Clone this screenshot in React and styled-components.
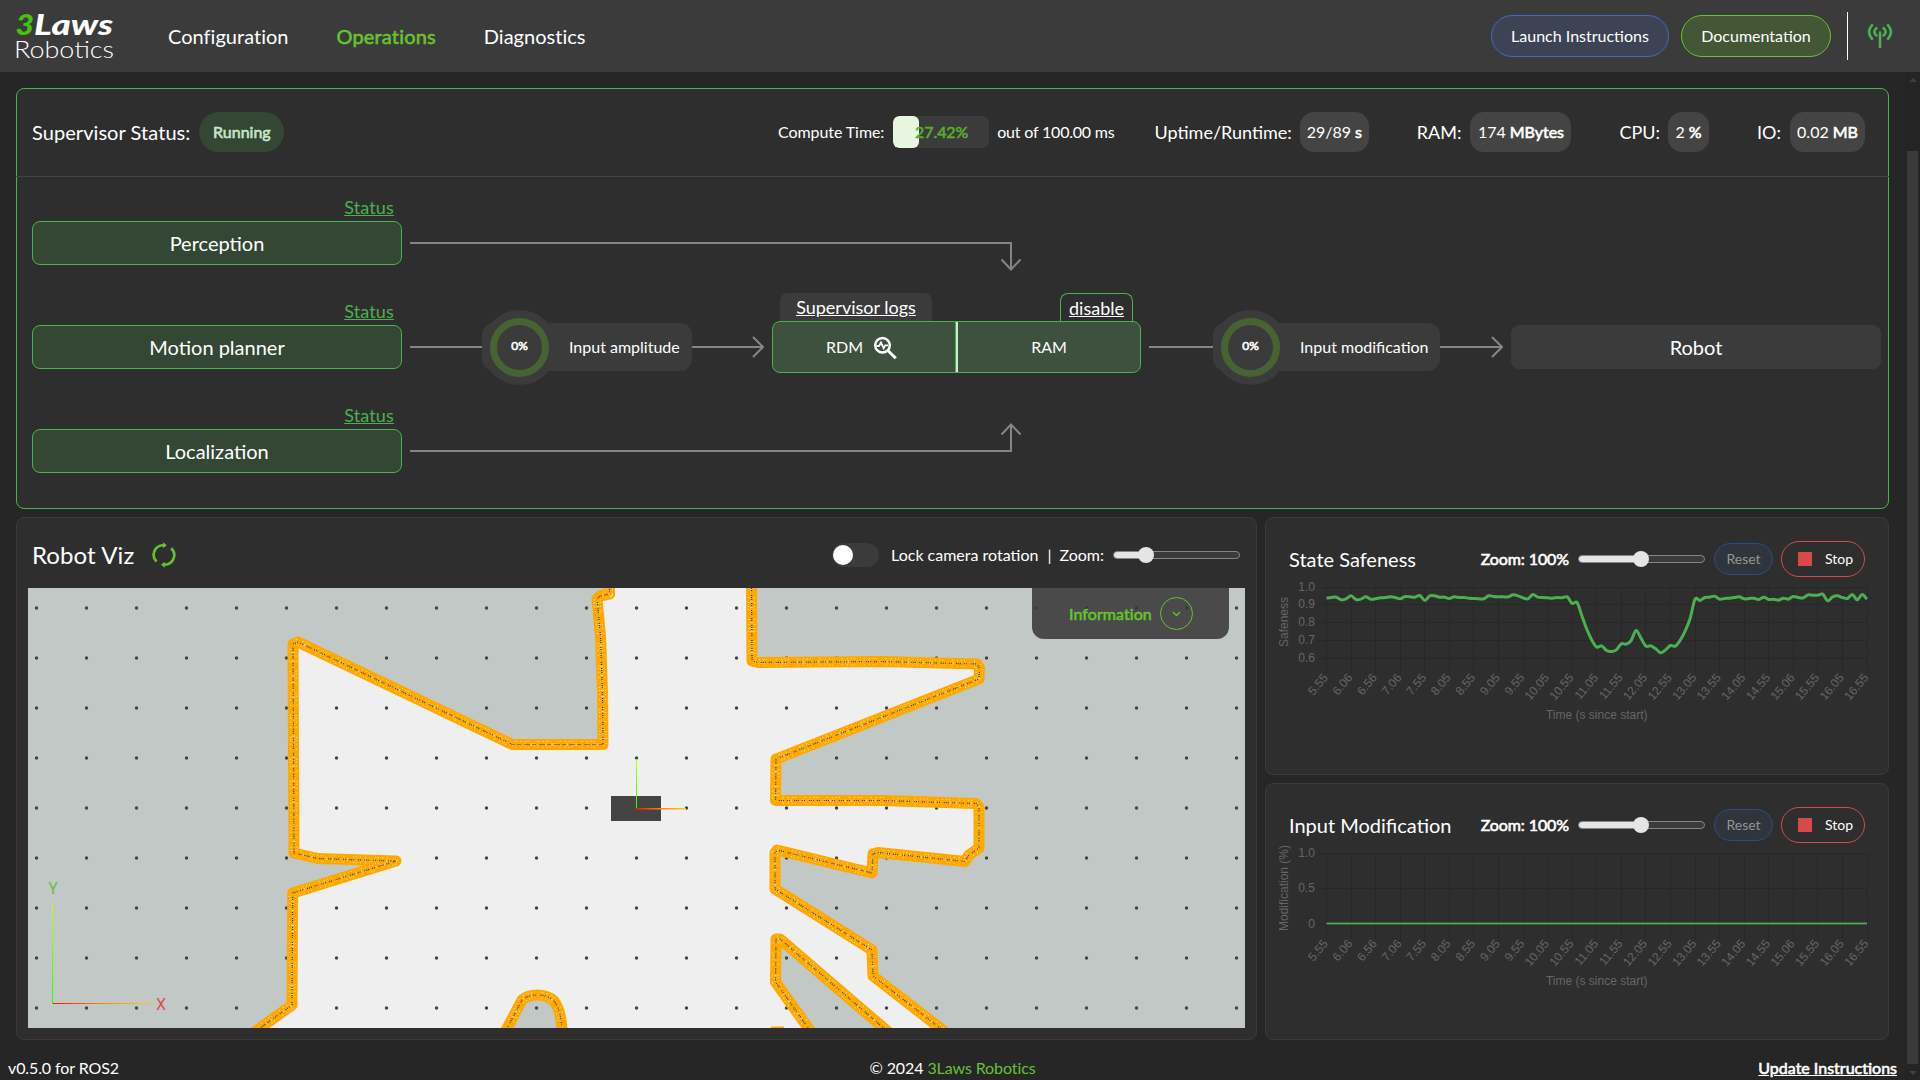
import React from "react";
import styled, { createGlobalStyle, css } from "styled-components";

const Global = createGlobalStyle`
  * { box-sizing: border-box; }
  html, body { margin: 0; padding: 0; background: #262626; }
  body { font-family: Lato, "Open Sans", sans-serif; font-size: 16px; color: #fff; overflow: hidden; }
  button { font-family: inherit; cursor: pointer; }
  a { color: inherit; }
`;

const strong = css`
  -webkit-text-stroke: 0.6px currentColor;
`;

const Strong = styled.span`
  ${strong}
`;

const Page = styled.div`
  width: 1920px;
  height: 1080px;
  display: flex;
  flex-direction: column;
  background: #262626;
  overflow: hidden;
`;

/* ---------- header ---------- */

const Header = styled.header`
  height: 72px;
  flex: none;
  display: flex;
  align-items: center;
  padding: 0 27px 0 15px;
  background: #3b3b3b;
`;

const Logo = styled.svg`
  width: 100px;
  height: 64px;
  margin-right: 53px;
  overflow: visible;
`;

const Nav = styled.nav`
  display: flex;
  gap: 48px;
  flex: 1;
`;

const NavLink = styled.a`
  font-size: 20px;
  line-height: 24px;
  letter-spacing: ${(p) => (p.$active ? 0.16 : 0.02)}px;
  color: ${(p) => (p.$active ? "#67c22f" : "#fff")};
  ${(p) => p.$active && strong}
`;

const HeaderButton = styled.button`
  height: 42px;
  width: ${(p) => p.$w}px;
  margin-right: ${(p) => p.$gap}px;
  padding: 0 0 2px;
  border-radius: 21px;
  border: 1px solid ${(p) => (p.$green ? "#67c22f" : "#4169c0")};
  background: ${(p) => (p.$green ? "#435636" : "#3d4354")};
  color: #fff;
  font-size: 16px;
`;

const HeaderRule = styled.div`
  width: 1px;
  height: 48px;
  margin-right: 19px;
  background: #fff;
`;

/* ---------- body ---------- */

const Body = styled.div`
  flex: 1;
  display: flex;
  min-height: 0;
`;

const Main = styled.main`
  width: 1905px;
  display: flex;
  flex-direction: column;
  padding-top: 16px;
`;

const Scrollbar = styled.div`
  width: 15px;
  display: flex;
  flex-direction: column;
  align-items: center;
  padding: 6px 0 5px;
  background: #242424;
`;

const ScrollThumb = styled.div`
  width: 11px;
  height: 914px;
  margin: 69px 0 7px;
  background: #3b3b3b;
`;

const ScrollArrow = styled.div`
  border: 4px solid transparent;
  border-top-width: ${(p) => (p.$up ? 0 : 4)}px;
  border-bottom-width: ${(p) => (p.$up ? 4 : 0)}px;
  border-${(p) => (p.$up ? "bottom" : "top")}-color: #404040;
`;

const Supervisor = styled.section`
  height: 421px;
  width: 1873px;
  margin-left: 16px;
  border: 1px solid #4caf50;
  border-radius: 8px;
  background: #2e2e2e;
`;

const StatusBar = styled.div`
  height: 88px;
  margin: 0 -1px;
  padding: 0 24px 1px 16px;
  display: flex;
  align-items: center;
  border-bottom: 1px solid #444;
`;

const StatusTitle = styled.div`
  font-size: 20px;
  letter-spacing: 0.06px;
  margin-right: 9px;
`;

const RunningChip = styled.div`
  width: 85px;
  height: 40px;
  padding-bottom: 2px;
  border-radius: 20px;
  display: flex;
  align-items: center;
  justify-content: center;
  background: #344734;
  color: #c8e6c9;
  ${strong}
`;

const Metrics = styled.div`
  margin-left: auto;
  display: flex;
  align-items: center;
`;

const Metric = styled.div`
  display: flex;
  align-items: center;
  gap: ${(p) => p.$inner || 9}px;
  margin-left: ${(p) => p.$gap}px;
  font-size: ${(p) => (p.$small ? 16 : 18)}px;
  letter-spacing: ${(p) => (p.$small ? -0.08 : 0)}px;
`;

const MetricLabel = styled.span`
  padding-bottom: ${(p) => (p.$small ? 2 : 1)}px;
  letter-spacing: ${(p) => (p.$tight ? "-0.2px" : "inherit")};
`;

const MetricChip = styled.div`
  width: ${(p) => p.$w}px;
  height: 40px;
  padding-bottom: 2px;
  border-radius: 14px;
  display: flex;
  align-items: center;
  justify-content: center;
  gap: 4px;
  font-size: 16px;
  background: #444;
`;

const ComputeBar = styled.div`
  width: 96px;
  height: 32px;
  border-radius: 6px;
  display: flex;
  align-items: center;
  background: #3b3b3b;
  overflow: hidden;
`;

const ComputeFill = styled.div`
  height: 32px;
  border-radius: 6px;
  background: #e8f5e0;
`;

const ComputeText = styled.div`
  margin-left: -4px;
  padding-bottom: 2px;
  color: #5aad2c;
  ${strong}
`;

const Flow = styled.div`
  display: grid;
  grid-template-columns: 370px 354px 369px 354px 370px;
  grid-template-rows: repeat(3, 104px);
  column-gap: 8px;
  padding: 13px 0 0 15px;
`;

const Stage = styled.div`
  display: flex;
  flex-direction: column;
  grid-column: ${(p) => p.$col};
  grid-row: ${(p) => p.$row};
`;

const StatusLink = styled.a`
  height: 31px;
  padding: 6px 8px 0 0;
  line-height: 22px;
  text-align: right;
  font-size: 18px;
  letter-spacing: 0.15px;
  text-decoration: underline;
  color: #4caf50;
`;

const StageBox = styled.div`
  height: 44px;
  margin-top: ${(p) => (p.$plain ? 31 : 0)}px;
  border: 1px solid ${(p) => (p.$plain ? "#3b3b3b" : "#4caf50")};
  border-radius: 8px;
  background: ${(p) => (p.$plain ? "#3b3b3b" : "#344734")};
  display: flex;
  align-items: center;
  justify-content: center;
  font-size: 20px;
`;

const BentArrow = styled.svg`
  width: 620px;
  height: 60px;
  grid-column: 2 / 4;
  grid-row: ${(p) => p.$row};
  margin-top: ${(p) => p.$top}px;
`;

const Link = styled.div`
  grid-row: 2;
  grid-column: ${(p) => p.$col};
  display: flex;
  align-items: center;
  height: 75px;
  margin-top: 15.5px;
`;

const Line = styled.div`
  width: ${(p) => p.$w}px;
  height: 2px;
  background: #858585;
`;

const Gauge = styled.div`
  width: ${(p) => p.$w}px;
  height: 48px;
  border-radius: 12px;
  background: #3b3b3b;
  display: flex;
  align-items: center;
  font-size: 16px;
`;

const GaugeLabel = styled.span`
  padding-bottom: 2px;
`;

const Dial = styled.div`
  flex: none;
  width: 75px;
  height: 75px;
  border-radius: 50%;
  background: #3b3b3b;
  display: flex;
  align-items: center;
  justify-content: center;
  margin-right: 12px;
`;

const Ring = styled.div`
  width: 59px;
  height: 59px;
  border-radius: 50%;
  border: 7px solid #486333;
  display: flex;
  align-items: center;
  justify-content: center;
  font-size: 12px;
  padding-bottom: 3px;
  ${strong}
`;

const Head = styled.svg`
  flex: 1;
  height: 24px;
`;

const Modules = styled.div`
  grid-column: 3;
  grid-row: 2;
`;

const Tabs = styled.div`
  height: 28px;
  margin-top: -1px;
  padding: 0 8px;
  display: flex;
  justify-content: space-between;
`;

const Tab = styled.a`
  width: ${(p) => p.$w}px;
  height: 28px;
  border-radius: 8px 8px 0 0;
  border: ${(p) => (p.$outlined ? "1px solid #4caf50" : "0")};
  border-bottom: 0;
  background: ${(p) => (p.$outlined ? "#2e2e2e" : "#3b3b3b")};
  text-align: center;
  font-size: 18px;
  line-height: 29px;
  text-decoration: underline;
`;

const ModuleBox = styled.div`
  height: 52px;
  border: 1px solid #4caf50;
  border-radius: 8px;
  background: #3e513e;
  display: grid;
  grid-template-columns: 183px 1fr;
  font-size: 16px;
`;

const Module = styled.div`
  display: flex;
  align-items: center;
  justify-content: center;
  gap: 10px;
  padding: 0 ${(p) => (p.$split ? 0 : 5)}px 2px 0;
  border-left: ${(p) => (p.$split ? "2px solid #c8f0c8" : "0")};
  box-shadow: ${(p) => (p.$split ? "-1px 0 0 #4caf50" : "none")};
  svg { margin-top: 4px; }
`;

/* ---------- lower panels ---------- */

const Lower = styled.div`
  display: flex;
  gap: 8px;
  margin: 8px 0 0 16px;
`;

const Panel = styled.section`
  border: 1px solid #3a3a3a;
  border-radius: 8px;
  background: #2e2e2e;
  overflow: hidden;
`;

const VizPanel = styled(Panel)`
  width: 1241px;
  height: 523px;
`;

const VizHeader = styled.div`
  height: 70px;
  padding: 4px 16px 0 15px;
  display: flex;
  align-items: center;
`;

const VizTitle = styled.h2`
  margin: 0 18px 0 0;
  padding-bottom: 2px;
  font-size: 24px;
  font-weight: 400;
  letter-spacing: 0.1px;
`;

const VizTools = styled.div`
  margin-left: auto;
  display: flex;
  align-items: center;
  font-size: 16px;
`;

const Toggle = styled.div`
  width: 47px;
  height: 24px;
  padding: 2px 1px;
  margin-right: 12px;
  border-radius: 12px;
  background: #3b3b3b;
`;

const Knob = styled.div`
  width: 20px;
  height: 20px;
  border-radius: 50%;
  background: #fff;
`;

const ToolText = styled.span`
  padding-bottom: 1px;
  margin-right: ${(p) => p.$gap}px;
`;

const Track = styled.div`
  width: 127px;
  height: 8px;
  border: 1px solid #858585;
  border-radius: 4px;
  background: #3b3b3b;
  display: flex;
  align-items: center;
`;

const TrackFill = styled.div`
  width: ${(p) => p.$w}px;
  height: 6px;
  border-radius: 3px 0 0 3px;
  background: #e5e5e5;
`;

const Thumb = styled.div`
  flex: none;
  width: 16px;
  height: 16px;
  margin-left: -8px;
  border-radius: 50%;
  background: #e5e5e5;
`;

const MapArea = styled.div`
  position: relative;
  width: 1217px;
  height: 440px;
  margin-left: 11px;
`;

const MapSvg = styled.svg`
  display: block;
  width: 1217px;
  height: 440px;
`;

const Info = styled.div`
  position: absolute;
  right: 16px;
  top: 0;
  width: 197px;
  height: 51px;
  border-radius: 0 0 12px 12px;
  background: rgba(56, 56, 56, 0.88);
  display: flex;
  align-items: center;
  padding-left: 37px;
  gap: 8px;
  letter-spacing: 0.08px;
  color: #67c22f;
`;

const InfoButton = styled.div`
  width: 33px;
  height: 33px;
  border: 1px solid #67c22f;
  border-radius: 50%;
  display: flex;
  align-items: center;
  justify-content: center;
`;

const Charts = styled.div`
  display: flex;
  flex-direction: column;
  gap: 8px;
`;

const ChartPanel = styled(Panel)`
  width: 624px;
  height: ${(p) => p.$h}px;
`;

const ChartHeader = styled.div`
  height: 60px;
  padding: 21px 23px 0 23px;
  display: flex;
  align-items: center;
`;

const ChartTitle = styled.h3`
  flex: 1;
  margin: 0;
  font-size: 20px;
  font-weight: 400;
`;

const ZoomText = styled.span`
  margin-right: 9px;
  letter-spacing: -0.1px;
  ${strong}
`;

const Reset = styled.button`
  width: 59px;
  height: 32px;
  padding: 0;
  margin: 0 8px 0 9px;
  border-radius: 16px;
  border: 1px solid #304a80;
  background: #30343d;
  color: #949494;
  font-size: 14px;
`;

const Stop = styled.button`
  width: 84px;
  height: 36px;
  padding: 0 11px 0 16px;
  display: flex;
  align-items: center;
  justify-content: space-between;
  border-radius: 18px;
  border: 1px solid #d64a4a;
  background: transparent;
  color: #fff;
  font-size: 14px;
`;

const StopIcon = styled.span`
  width: 14px;
  height: 14px;
  background: #d64a4a;
`;

const Plot = styled.svg`
  display: block;
  width: 622px;
  height: 170px;
  font-family: "Liberation Sans", Arial, sans-serif;
  font-size: 12px;
`;

const Footer = styled.footer`
  flex: 1;
  display: grid;
  grid-template-columns: 1fr auto 1fr;
  align-items: center;
  padding: 15px 8px 0;
  letter-spacing: -0.1px;
`;

const FooterLink = styled.a`
  justify-self: end;
  letter-spacing: 0;
  text-decoration: underline;
  ${strong}
`;

const Brand = styled.span`
  color: #67c22f;
`;

/* ---------- data ---------- */

/* distance below the 1.0 grid line, in thirds of a pixel, one sample per 0.1 s */
const SAFENESS = [
  32, 30, 29, 37, 34, 25, 36, 35, 28, 35, 34, 31, 30, 28, 30, 34, 27, 28, 29, 24, 39, 25, 25, 29, 29, 33, 28, 30,
  30, 32, 33, 34, 34, 25, 27, 28, 28, 28, 22, 25, 31, 34, 21, 29, 30, 31, 32, 30, 31, 28, 48, 45, 86, 126, 158,
  179, 175, 189, 192, 187, 169, 170, 159, 129, 152, 176, 175, 184, 196, 187, 174, 176, 158, 130, 93, 35, 39, 30,
  29, 26, 35, 33, 32, 30, 28, 34, 33, 32, 36, 29, 36, 35, 38, 32, 35, 27, 30, 31, 22, 23, 23, 20, 40, 28, 25, 30,
  33, 21, 37, 21, 35,
];

const TIMES = [
  "5.55", "6.06", "6.56", "7.06", "7.55", "8.05", "8.55", "9.05", "9.55", "10.05", "10.55", "11.05", "11.55",
  "12.05", "12.55", "13.05", "13.55", "14.05", "14.55", "15.06", "15.55", "16.05", "16.55",
];

const LEFT = 60.5;
const WIDTH = 540.5;
const TOP = 9.5;
const BOTTOM = 87.5;

function smooth(points) {
  let d = `M${points[0][0]} ${points[0][1]}`;
  for (let i = 0; i < points.length - 1; i++) {
    const p0 = points[Math.max(i - 1, 0)];
    const p1 = points[i];
    const p2 = points[i + 1];
    const p3 = points[Math.min(i + 2, points.length - 1)];
    const k = 0.16;
    d += `C${p1[0] + (p2[0] - p0[0]) * k} ${p1[1] + (p2[1] - p0[1]) * k} ${p2[0] - (p3[0] - p1[0]) * k} ${
      p2[1] - (p3[1] - p1[1]) * k
    } ${p2[0]} ${p2[1]}`;
  }
  return d;
}

const SAFENESS_PATH = smooth(SAFENESS.map((v, i) => [LEFT + (i * WIDTH) / 110, TOP + v / 3]));

function Chart({ label, labelY, ticks, children }) {
  return (
    <Plot viewBox="0 0 622 170">
      <g stroke="#272727" strokeWidth="1">
        {TIMES.map((t, i) => {
          const x = Math.round(LEFT + (i * WIDTH) / 22 - 0.5) + 0.5;
          return <line key={t} x1={x} x2={x} y1={TOP} y2={BOTTOM + 8} strokeOpacity={0.9} />;
        })}
        {ticks.map(([t, y]) => (
          <line key={t} x1={LEFT - 8} x2={LEFT + WIDTH} y1={y} y2={y} />
        ))}
      </g>
      <g fill="#666">
        {ticks.map(([t, y]) => (
          <text key={t} x={LEFT - 11.5} y={y + 3.5} textAnchor="end">{t}</text>
        ))}
        {TIMES.map((t, i) => (
          <text
            key={t}
            textAnchor="end"
            transform={`translate(${LEFT + (i * WIDTH) / 22 + 2} ${BOTTOM + 12.5}) rotate(-50)`}
          >
            {t}
          </text>
        ))}
        <text x={LEFT + WIDTH / 2} y="141" textAnchor="middle">Time (s since start)</text>
        <text textAnchor="middle" transform={`translate(22 ${labelY}) rotate(-90)`}>{label}</text>
      </g>
      {children}
    </Plot>
  );
}

function ChartCard({ title, height, children }) {
  return (
    <ChartPanel $h={height}>
      <ChartHeader>
        <ChartTitle>{title}</ChartTitle>
        <ZoomText>Zoom: 100%</ZoomText>
        <Slider value={62} />
        <Reset>Reset</Reset>
        <Stop>
          <StopIcon />
          Stop
        </Stop>
      </ChartHeader>
      {children}
    </ChartPanel>
  );
}

function Slider({ value }) {
  return (
    <Track>
      <TrackFill $w={value} />
      <Thumb />
    </Track>
  );
}

/* map geometry in canvas pixels */
const LEFT_WALL =
  "M221 448L264 417L264.700 305L368 273L290 270.500L266 265L265 56L270 54L484.500 156.500L575 156.500L574.500 104L572.500 48L569 11L572 8L581.500 6L581.500 -8";
const RIGHT_WALL =
  "L724 73L730 74.500L853 73.500L949 76L951.500 80L951 91L748 171L747.500 212.500L853 212.500L948 215.500L951 219L951 260L941 267L937 273.500L850 264.500L845 266L844 285L749 262L747 265L747 301L844 362L845 388L930 454";
const INNER_WALL = "M786 448L747.500 394L748 351L752 351L865 448";
const ARCH = "M475 448L494 412Q500 407 509 407Q520 407 526 413Q534 423 534 448";
const WALLS = [LEFT_WALL, "M723.500 -8" + RIGHT_WALL, INNER_WALL, ARCH, "M743 444H756"];

const DOTS = [];
for (let y = 20; y < 440; y += 50) for (let x = 8.5; x < 1217; x += 50) DOTS.push([x, y]);

function RobotMap() {
  return (
    <MapSvg viewBox="0 0 1217 440">
      <defs>
        <linearGradient id="up" x1="0" y1="1" x2="0" y2="0">
          <stop offset="0" stopColor="#20ff00" />
          <stop offset="1" stopColor="#c0ff20" />
        </linearGradient>
        <linearGradient id="right">
          <stop offset="0" stopColor="#ff1000" />
          <stop offset="0.5" stopColor="#ff8800" />
          <stop offset="1" stopColor="#f5d020" />
        </linearGradient>
      </defs>
      <rect width="1217" height="440" fill="#c2c8c6" />
      <path d={LEFT_WALL + "L723.500 -8" + RIGHT_WALL + "Z"} fill="#efefef" />
      <path d={INNER_WALL + "Z"} fill="#c2c8c6" />
      <path d={ARCH + "Z"} fill="#c2c8c6" />
      <g fill="#3e4442">
        {DOTS.map(([x, y]) => (
          <circle key={x + "-" + y} cx={x} cy={y} r="1.700" />
        ))}
      </g>
      <g fill="none" strokeLinejoin="round">
        {WALLS.map((d) => (
          <g key={d}>
            <path d={d} stroke="#ffa800" strokeWidth="11" />
            <path d={d} stroke="#fff0cf" strokeWidth="7" strokeDasharray="1 3 1 2 1 9 1 4" opacity="0.8" />
            <path d={d} stroke="#ffa800" strokeWidth="5" />
            <path d={d} stroke="#e8d9b4" strokeWidth="3" strokeDasharray="1 5 1 2 1 11" opacity="0.8" />
            <path d={d} stroke="#3a3a3c" strokeWidth="1.200" strokeDasharray="1 1 1 1 1 3 1 1 1 4" />
          </g>
        ))}
      </g>
      <rect x="583" y="208" width="50" height="25" fill="#444" />
      <rect x="608" y="171" width="1" height="50" fill="url(#up)" />
      <rect x="608" y="220" width="50" height="1.500" fill="url(#right)" />
      <rect x="24" y="315" width="1" height="101" fill="url(#up)" />
      <rect x="25" y="415" width="101" height="1" fill="url(#right)" />
      <g fontFamily="Roboto, sans-serif" fontSize="16" textAnchor="middle">
        <text x="25" y="306" fill="#6dbb45">Y</text>
        <text x="133" y="422" fill="#d9534f">X</text>
      </g>
    </MapSvg>
  );
}

function Connector({ col, lineA, width, label, lineB }) {
  return (
    <Link $col={col}>
      <Line $w={lineA} />
      <Gauge $w={width}>
        <Dial>
          <Ring>0%</Ring>
        </Dial>
        <GaugeLabel>{label}</GaugeLabel>
      </Gauge>
      <Head viewBox={`0 0 ${lineB} 24`}>
        <path
          d={`M0 12H${lineB - 1}M${lineB - 11} 2L${lineB - 1} 12L${lineB - 11} 22`}
          fill="none"
          stroke="#858585"
          strokeWidth="2"
        />
      </Head>
    </Link>
  );
}

export default function App() {
  return (
    <Page>
      <Global />
      <Header>
        <Logo viewBox="0 -4 100 64" fontFamily="Lato, sans-serif" fill="#fff">
          <g fontWeight="900" fontStyle="italic" fontSize="28.500">
            <text x="0.500" y="26.600" textLength="18.500" lengthAdjust="spacingAndGlyphs" fill="#45c30c">3</text>
            <text x="19" y="26.600" textLength="79" lengthAdjust="spacingAndGlyphs">Laws</text>
          </g>
          <text x="-1" y="50" fontWeight="300" fontSize="23" textLength="100" lengthAdjust="spacingAndGlyphs">
            Robotics
          </text>
        </Logo>
        <Nav>
          <NavLink>Configuration</NavLink>
          <NavLink $active>Operations</NavLink>
          <NavLink>Diagnostics</NavLink>
        </Nav>
        <HeaderButton $w={178} $gap={12}>Launch Instructions</HeaderButton>
        <HeaderButton $w={150} $gap={16} $green>Documentation</HeaderButton>
        <HeaderRule />
        <svg width="26" height="28" viewBox="0 0 26 28" fill="none" stroke="#4caf50" strokeWidth="2.600" strokeLinecap="round">
          <path d="M13 10.500V25M9.400 6.200Q5.200 9.800 9.400 13.400M16.600 6.200Q20.800 9.800 16.600 13.400M5 3.200Q-0.900 10 5 16.800M21 3.200Q26.900 10 21 16.800" />
        </svg>
      </Header>
      <Body>
        <Main>
          <Supervisor>
            <StatusBar>
              <StatusTitle>Supervisor Status:</StatusTitle>
              <RunningChip>Running</RunningChip>
              <Metrics>
                <Metric $gap={0} $inner={8.5} $small>
                  <MetricLabel $small>Compute Time:</MetricLabel>
                  <ComputeBar>
                    <ComputeFill style={{ width: "27.42%" }} />
                    <ComputeText>27.42%</ComputeText>
                  </ComputeBar>
                  <MetricLabel $small $tight>out of 100.00 ms</MetricLabel>
                </Metric>
                <Metric $gap={40} $inner={8}>
                  <MetricLabel>Uptime/Runtime:</MetricLabel>
                  <MetricChip $w={69}>29/89 <Strong>s</Strong></MetricChip>
                </Metric>
                <Metric $gap={48}>
                  <MetricLabel>RAM:</MetricLabel>
                  <MetricChip $w={101}>174 <Strong>MBytes</Strong></MetricChip>
                </Metric>
                <Metric $gap={48} $inner={8}>
                  <MetricLabel>CPU:</MetricLabel>
                  <MetricChip $w={41}>2 <Strong>%</Strong></MetricChip>
                </Metric>
                <Metric $gap={48} $inner={9}>
                  <MetricLabel>IO:</MetricLabel>
                  <MetricChip $w={75}>0.02 <Strong>MB</Strong></MetricChip>
                </Metric>
              </Metrics>
            </StatusBar>
            <Flow>
              <Stage $col={1} $row={1}>
                <StatusLink>Status</StatusLink>
                <StageBox>Perception</StageBox>
              </Stage>
              <BentArrow $row={1} $top={42} viewBox="0 0 620 60" fill="none" stroke="#858585" strokeWidth="2">
                <path d="M0 11H601V37M591.500 27.500L601 37.500L610.500 27.500" />
              </BentArrow>
              <Stage $col={1} $row={2}>
                <StatusLink>Status</StatusLink>
                <StageBox>Motion planner</StageBox>
              </Stage>
              <Connector col={2} lineA={72} width={210} label="Input amplitude" lineB={72} />
              <Modules>
                <Tabs>
                  <Tab $w={152}>Supervisor logs</Tab>
                  <Tab $w={73} $outlined>disable</Tab>
                </Tabs>
                <ModuleBox>
                  <Module>
                    RDM
                    <svg width="25" height="24" viewBox="0 0 25 24" fill="none" stroke="#fff">
                      <circle cx="9.500" cy="9.300" r="7.300" strokeWidth="2.500" />
                      <path d="M14.800 14.500L22.800 22.300" strokeWidth="3" />
                      <path d="M3.500 10H6L8 6.500L10.700 12.200L12.300 9.300H15" strokeWidth="1.800" />
                    </svg>
                  </Module>
                  <Module $split>RAM</Module>
                </ModuleBox>
              </Modules>
              <Connector col={4} lineA={64} width={227} label="Input modification" lineB={63} />
              <Stage $col={5} $row={2}>
                <StageBox $plain>Robot</StageBox>
              </Stage>
              <Stage $col={1} $row={3}>
                <StatusLink>Status</StatusLink>
                <StageBox>Localization</StageBox>
              </Stage>
              <BentArrow $row={3} $top={22} viewBox="0 0 620 60" fill="none" stroke="#858585" strokeWidth="2">
                <path d="M0 31H601V5M591.500 14.500L601 4.500L610.500 14.500" />
              </BentArrow>
            </Flow>
          </Supervisor>
          <Lower>
            <VizPanel>
              <VizHeader>
                <VizTitle>Robot Viz</VizTitle>
                <svg width="24" height="26" viewBox="0 0 24 26" fill="none" stroke="#67c22f" strokeWidth="2.600">
                  <path d="M4.500 19.500A9.500 9.500 0 0 1 11.500 3.300M19.200 6.300A9.500 9.500 0 0 1 12.500 22.700" />
                  <path d="M11 0.300L14.800 3.300L11 6.300ZM12.800 19.700L9 22.700L12.800 25.700Z" fill="#67c22f" stroke="none" />
                </svg>
                <VizTools>
                  <Toggle>
                    <Knob />
                  </Toggle>
                  <ToolText $gap={9}>Lock camera rotation</ToolText>
                  <ToolText $gap={8}>|</ToolText>
                  <ToolText $gap={9}>Zoom:</ToolText>
                  <Slider value={32} />
                </VizTools>
              </VizHeader>
              <MapArea>
                <RobotMap />
                <Info>
                  <Strong>Information</Strong>
                  <InfoButton>
                    <svg width="9" height="6" viewBox="0 0 9 6" fill="none" stroke="#67c22f" strokeWidth="1.300">
                      <path d="M1 1L4.500 4.500L8 1" />
                    </svg>
                  </InfoButton>
                </Info>
              </MapArea>
            </VizPanel>
            <Charts>
              <ChartCard title="State Safeness" height={258}>
                <Chart
                  label="Safeness"
                  labelY={44}
                  ticks={[["1.0", 9.5], ["0.9", 26.5], ["0.8", 44.5], ["0.7", 62.5], ["0.6", 80.5]]}
                >
                  <path d={SAFENESS_PATH} fill="none" stroke="#4caf50" strokeWidth="3" />
                </Chart>
              </ChartCard>
              <ChartCard title="Input Modification" height={257}>
                <Chart label="Modification (%)" labelY={44} ticks={[["1.0", 9.5], ["0.5", 44.5], ["0", 80.5]]}>
                  <g stroke="#4caf50">
                    <line x1={LEFT} x2={LEFT + WIDTH} y1="79.500" y2="79.500" strokeWidth="3" strokeOpacity="0.4" />
                    <line x1={LEFT} x2={LEFT + WIDTH} y1="79.500" y2="79.500" strokeWidth="1" />
                  </g>
                </Chart>
              </ChartCard>
            </Charts>
          </Lower>
          <Footer>
            <span>v0.5.0 for ROS2</span>
            <span>© 2024 <Brand>3Laws Robotics</Brand></span>
            <FooterLink>Update Instructions</FooterLink>
          </Footer>
        </Main>
        <Scrollbar>
          <ScrollArrow $up />
          <ScrollThumb />
          <ScrollArrow />
        </Scrollbar>
      </Body>
    </Page>
  );
}
